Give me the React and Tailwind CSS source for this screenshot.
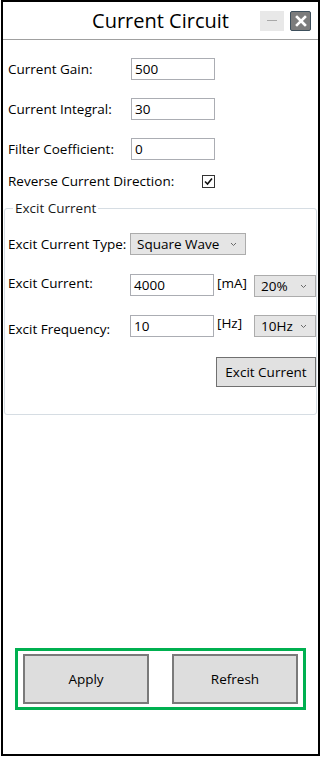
import { useState } from 'react';

const font = "font-['Open_Sans','Liberation_Sans',sans-serif]";

function Chevron() {
  return (
    <svg width="7" height="5" viewBox="0 0 7 5" className="shrink-0">
      <path d="M1 1 L3.5 3.5 L6 1" fill="none" stroke="#6a6a6a" strokeWidth="1" />
    </svg>
  );
}

function Select({ value, className = '' }) {
  return (
    <div className={`flex h-[22px] items-center justify-between border border-[#acacac] bg-[#e5e5e5] pl-[6px] pr-[8px] text-[13.5px] text-black ${className}`}>
      <span>{value}</span>
      <Chevron />
    </div>
  );
}

function TextBox({ value, className = '' }) {
  return (
    <div className={`flex h-[22px] items-center border border-[#abadb3] bg-white px-[3px] text-[13.5px] text-black ${className}`}>
      {value}
    </div>
  );
}

function Field({ label, value, mt }) {
  return (
    <div className={`flex h-[22px] items-center ${mt}`}>
      <span className="w-[123px] text-[13.5px]">{label}</span>
      <TextBox value={value} className="w-[84px]" />
    </div>
  );
}

export default function App() {
  const [reverse, setReverse] = useState(true);

  return (
    <div className={`${font} ml-[1px] flex h-[756px] w-[319px] flex-col border-2 border-black bg-white text-black`}>
      {/* title bar */}
      <div className="grid h-[38px] grid-cols-[1fr_auto_1fr] items-center border-b border-[#a0a0a0]">
        <div />
        <span className="text-[20px] leading-none">Current Circuit</span>
        <div className="flex items-center justify-end gap-[6px] pr-[7px]">
          <div className="flex h-[20px] w-[24px] items-center justify-center bg-[#e8e8e8]">
            <div className="h-px w-[10px] bg-[#a8a8a8]" />
          </div>
          <div className="flex h-[20px] w-[21px] items-center justify-center rounded-[2px] border border-[#3d4f5c] bg-[#7c7c7c]">
            <svg width="12" height="12" viewBox="0 0 12 12">
              <path d="M2 2 L10 10 M10 2 L2 10" stroke="#fff" strokeWidth="2.6" strokeLinecap="square" />
            </svg>
          </div>
        </div>
      </div>

      {/* settings */}
      <div className="flex flex-col pl-[5px]">
        <Field label="Current Gain:" value="500" mt="mt-[18px]" />
        <Field label="Current Integral:" value="30" mt="mt-[18px]" />
        <Field label="Filter Coefficient:" value="0" mt="mt-[18px]" />
        <div className="mt-[13px] flex h-[16px] items-center">
          <span className="w-[194px] text-[13.5px]">Reverse Current Direction:</span>
          <button
            onClick={() => setReverse(!reverse)}
            className="flex h-[13px] w-[13px] items-center justify-center border border-[#333] bg-white"
          >
            {reverse && (
              <svg width="11" height="11" viewBox="0 0 11 11">
                <path d="M2 5.5 L4.5 8 L9 2.5" fill="none" stroke="#111" strokeWidth="1.6" />
              </svg>
            )}
          </button>
        </div>
      </div>

      {/* excit current group */}
      <fieldset className="mx-[1px] mt-[10px] rounded-[3px] border border-[#d6dde3] pb-[27px] pl-[3px]">
        <legend className="ml-[5px] px-[2px] text-[13.5px] leading-[18px] text-[#1a1a1a]">Excit Current</legend>
        <div className="mt-[16px] flex h-[22px] items-center">
          <span className="w-[122px] text-[13.5px]">Excit Current Type:</span>
          <Select value="Square Wave" className="w-[116px]" />
        </div>
        <div className="mt-[19px] flex h-[23px] items-start">
          <span className="mt-[-1px] w-[122px] text-[13.5px]">Excit Current:</span>
          <TextBox value="4000" className="w-[84px]" />
          <span className="ml-[3px] mt-[-1px] w-[37px] text-[13.5px]">[mA]</span>
          <Select value="20%" className="mt-[1px] w-[62px]" />
        </div>
        <div className="mt-[18px] flex h-[22px] items-start">
          <span className="mt-[4px] w-[122px] text-[13.5px]">Excit Frequency:</span>
          <TextBox value="10" className="w-[84px]" />
          <span className="ml-[3px] mt-[-2px] w-[37px] text-[13.5px]">[Hz]</span>
          <Select value="10Hz" className="w-[62px]" />
        </div>
        <div className="mt-[20px] flex justify-end">
          <button className="h-[30px] w-[100px] border border-[#707070] bg-[#e1e1e1] text-[13.5px]">Excit Current</button>
        </div>
      </fieldset>

      <div className="flex-1" />

      {/* action buttons */}
      <div className="mx-[12px] mb-[44px] flex justify-between border-[3px] border-[#00b050] px-[5px] py-[3px]">
        <button className="h-[50px] w-[126px] border-2 border-[#7a7a7a] bg-[#dddddd] text-[13.5px]">Apply</button>
        <button className="h-[50px] w-[126px] border-2 border-[#7a7a7a] bg-[#dddddd] text-[13.5px]">Refresh</button>
      </div>
    </div>
  );
}
